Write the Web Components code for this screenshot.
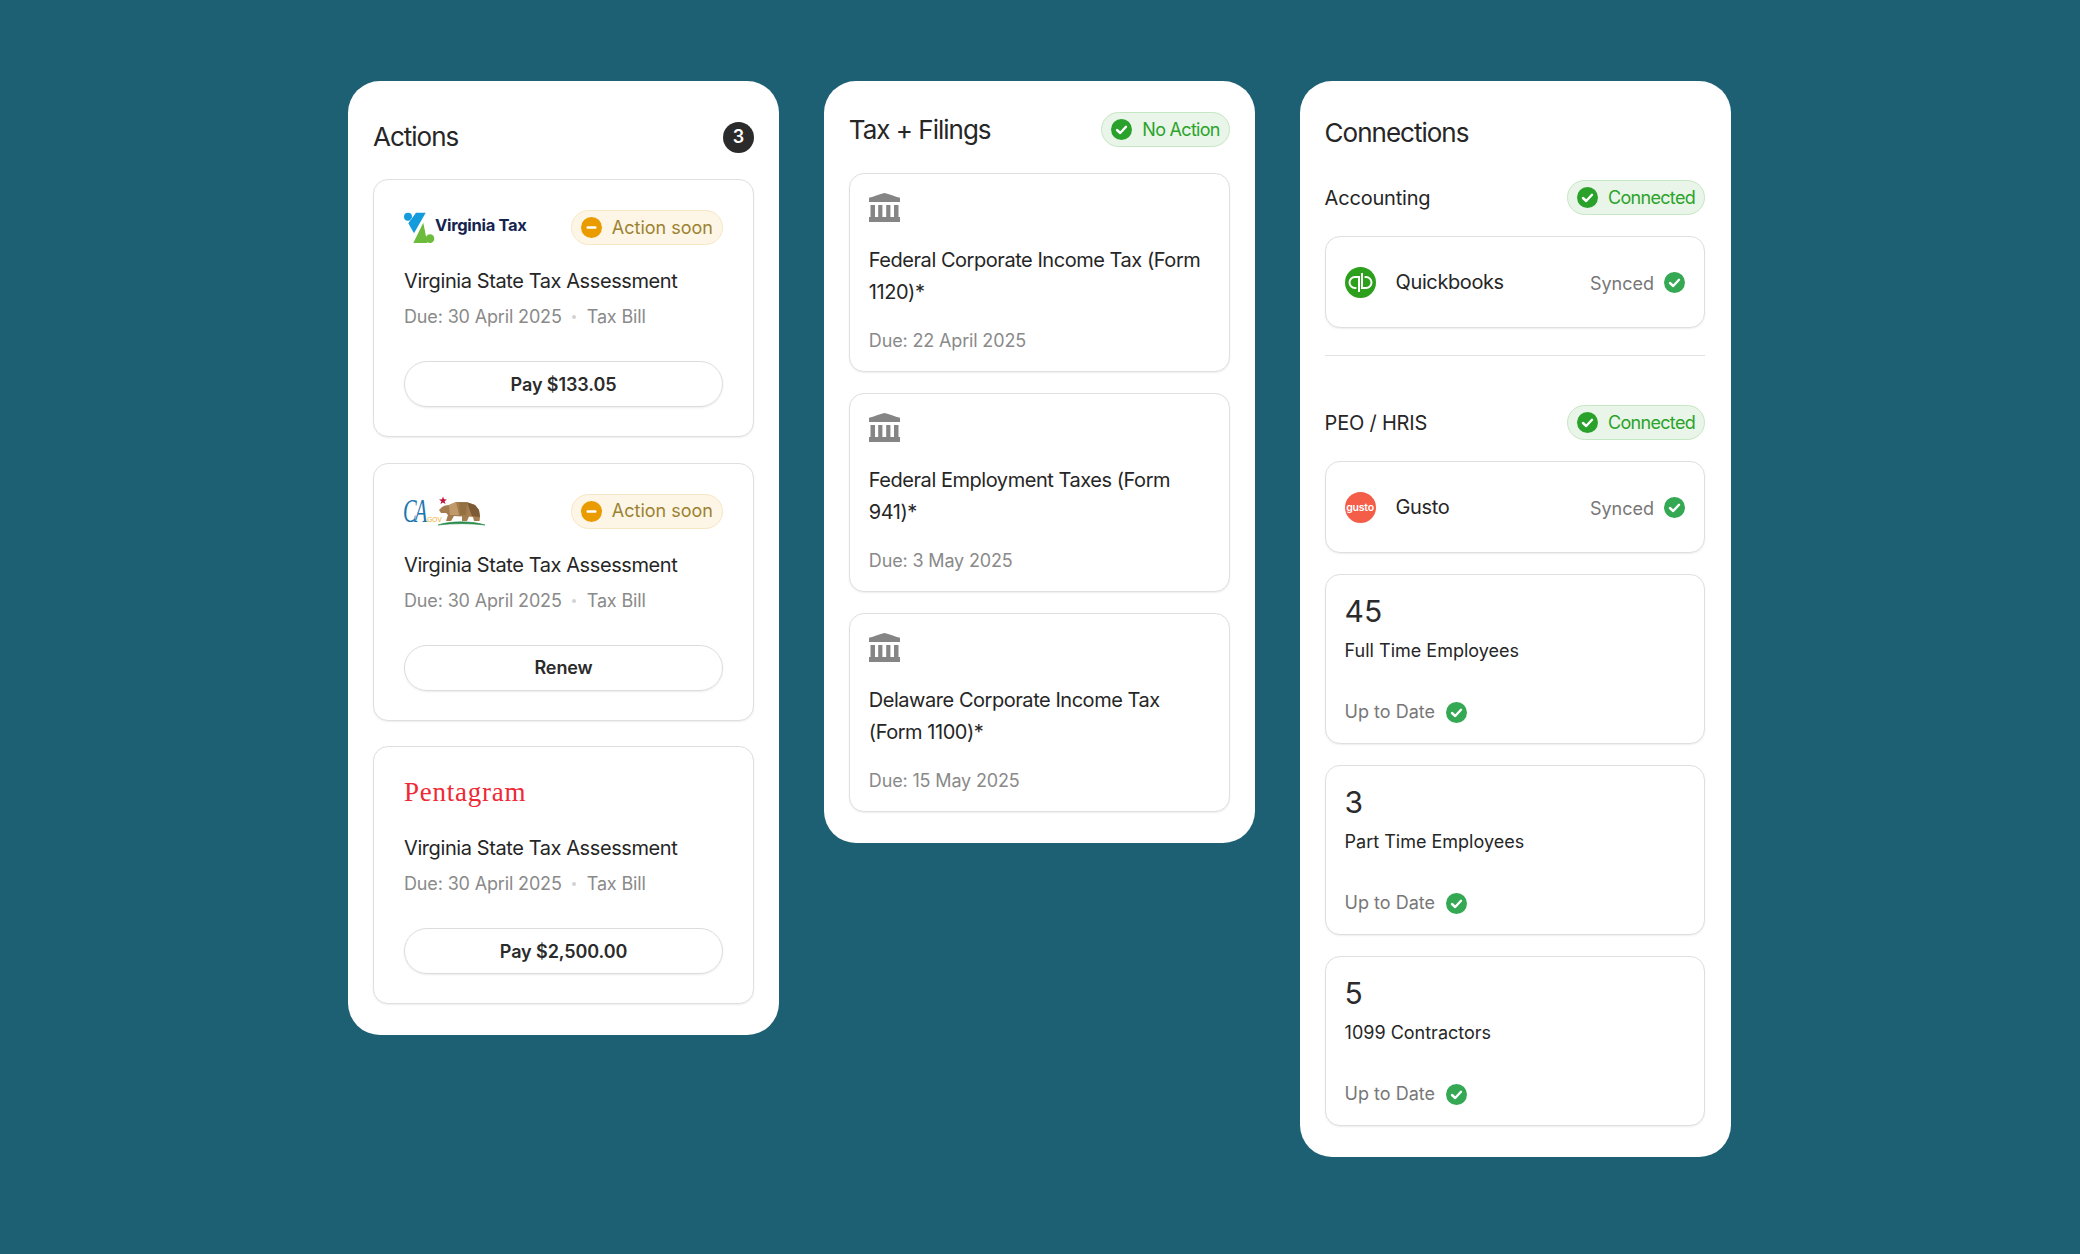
<!DOCTYPE html>
<html lang="en">
<head>
<meta charset="utf-8">
<title>Dashboard cards</title>
<style>
  html, body { margin: 0; }
  body {
    box-sizing: border-box;
    height: 1254px;
    overflow: hidden;
    padding: 81px 0 0 348px;
    display: flex;
    align-items: flex-start;
    gap: 44.8px;
    background: #1d6074;
    color: #262626;
    font-family: Inter, "Liberation Sans", sans-serif;
  }
</style>
</head>
<body>
  <dash-panel top="40" gap="26" item-gap="25.5">
    <span slot="title">Actions</span>
    <count-dot slot="aside">3</count-dot>
    <action-card heading="Virginia State Tax Assessment" cta="Pay $133.05" urgent>
      <va-logo slot="logo"></va-logo>
    </action-card>
    <action-card heading="Virginia State Tax Assessment" cta="Renew" urgent>
      <ca-logo slot="logo"></ca-logo>
    </action-card>
    <action-card heading="Virginia State Tax Assessment" cta="Pay $2,500.00">
      <pentagram-logo slot="logo"></pentagram-logo>
    </action-card>
  </dash-panel>

  <dash-panel top="31" gap="26" item-gap="21">
    <span slot="title">Tax + Filings</span>
    <status-badge slot="aside" tone="ok">No Action</status-badge>
    <filing-card due="Due: 22 April 2025">Federal Corporate Income Tax (Form 1120)*</filing-card>
    <filing-card due="Due: 3 May 2025">Federal Employment Taxes (Form 941)*</filing-card>
    <filing-card due="Due: 15 May 2025">Delaware Corporate Income Tax (Form 1100)*</filing-card>
  </dash-panel>

  <dash-panel top="36" gap="31" item-gap="21" right="25.6">
    <span slot="title">Connections</span>
    <section-row label="Accounting"></section-row>
    <sync-card name="Quickbooks"><qb-logo slot="logo"></qb-logo></sync-card>
    <hr-line></hr-line>
    <section-row label="PEO / HRIS"></section-row>
    <sync-card name="Gusto"><gusto-logo slot="logo"></gusto-logo></sync-card>
    <stat-card count="45" label="Full Time Employees"></stat-card>
    <stat-card count="3" label="Part Time Employees"></stat-card>
    <stat-card count="5" label="1099 Contractors"></stat-card>
  </dash-panel>

<script>
  // small helper: every element here is just a shadow root with a fixed template
  class Base extends HTMLElement {
    connectedCallback() {
      if (this.shadowRoot) return;
      this.attachShadow({ mode: "open" });
      this.shadowRoot.innerHTML = `<style>${this.renderStyle()}</style>${this.renderBody()}`;
    }
    attr(name, fallback = "") {
      return this.getAttribute(name) || fallback;
    }
    renderStyle() {
      return ":host { display: block; }";
    }
    renderBody() {
      return "<slot></slot>";
    }
  }

  const cardBox = /* css */ `
    box-sizing: border-box;
    background: #fff;
    border: 1px solid #dfdfdf;
    border-radius: 15px;
    box-shadow: 0 1px 2px rgba(0, 0, 0, 0.07);
  `;

  class DashPanel extends Base {
    renderStyle() {
      return /* css */ `
        :host {
          display: block;
          box-sizing: border-box;
          width: 431px;
          padding: ${this.attr("top", "40")}px ${this.attr("right", "25")}px 31px 25px;
          background: #fff;
          border-radius: 32px;
        }
        .head {
          display: flex;
          align-items: center;
          justify-content: space-between;
          margin-bottom: ${this.attr("gap", "26")}px;
          font-size: 26px;
          line-height: 32px;
          letter-spacing: -1px;
          color: #262626;
        }
        .items {
          display: flex;
          flex-direction: column;
          gap: ${this.attr("item-gap", "26")}px;
        }
      `;
    }
    renderBody() {
      return `
        <div class="head"><slot name="title"></slot><slot name="aside"></slot></div>
        <div class="items"><slot></slot></div>`;
    }
  }

  class CountDot extends Base {
    renderStyle() {
      return /* css */ `
        :host {
          display: flex;
          align-items: center;
          justify-content: center;
          width: 31px;
          height: 31px;
          border-radius: 50%;
          background: #2b2b2b;
          color: #fff;
          font-size: 18px;
          font-weight: 600;
          letter-spacing: 0;
        }
      `;
    }
  }

  class CheckDot extends Base {
    renderStyle() {
      return /* css */ `
        :host { display: block; width: 21px; height: 21px; flex: none; color: ${this.attr("color", "#34a853")}; }
        svg { display: block; }
      `;
    }
    renderBody() {
      return `<svg width="21" height="21" viewBox="0 0 21 21"><circle cx="10.5" cy="10.5" r="10.5" fill="currentColor"/><path d="M6 11l3.2 3L15 7.8" fill="none" stroke="#fff" stroke-width="2.4" stroke-linecap="round" stroke-linejoin="round"/></svg>`;
    }
  }

  class StatusBadge extends Base {
    renderStyle() {
      const ok = this.attr("tone") === "ok";
      return /* css */ `
        :host {
          display: inline-flex;
          align-items: center;
          box-sizing: border-box;
          height: 35px;
          padding: 0 9px;
          gap: 10px;
          border-radius: 18px;
          border: 1px solid ${ok ? "#c6e7c4" : "#f7e8c4"};
          background: ${ok ? "#e9f5e9" : "#fdf6e6"};
          color: ${ok ? "#2ca32a" : "#9c8230"};
          font-size: 18px;
          line-height: 28px;
          letter-spacing: ${ok ? "-0.7px" : "0"};
        }
        svg { display: block; flex: none; }
      `;
    }
    renderBody() {
      const ok = this.attr("tone") === "ok";
      const icon = ok
        ? `<check-dot color="#2aa12a"></check-dot>`
        : `<svg width="21" height="21" viewBox="0 0 21 21"><circle cx="10.5" cy="10.5" r="10.5" fill="#ea9b00"/><rect x="5.5" y="9.2" width="10" height="2.6" rx="1" fill="#fff"/></svg>`;
      return `${icon}<span><slot></slot></span>`;
    }
  }

  class ActionCard extends Base {
    renderStyle() {
      return /* css */ `
        :host {
          display: block;
          ${cardBox}
          padding: 30px 30px 29px;
        }
        .top {
          display: flex;
          align-items: center;
          justify-content: space-between;
          height: 35px;
        }
        .name {
          margin-top: 20px;
          font-size: 20px;
          line-height: 32px;
          letter-spacing: -0.41px;
          color: #262626;
        }
        .meta {
          display: flex;
          align-items: center;
          margin-top: 6px;
          font-size: 18px;
          line-height: 28px;
          letter-spacing: -0.15px;
          color: #8a8a8a;
        }
        .sep {
          width: 4px;
          height: 4px;
          margin: 0 10.5px;
          border-radius: 50%;
          background: #d2d2d2;
        }
        .cta {
          display: flex;
          align-items: center;
          justify-content: center;
          box-sizing: border-box;
          height: 46px;
          margin-top: 30px;
          border: 1px solid #dcdcdc;
          border-radius: 23px;
          box-shadow: 0 1px 2px rgba(0, 0, 0, 0.08);
          font-size: 18px;
          font-weight: 600;
          letter-spacing: -0.1px;
          color: #2b2b2b;
        }
      `;
    }
    renderBody() {
      const badge = this.hasAttribute("urgent") ? `<status-badge tone="warn">Action soon</status-badge>` : "";
      return `
        <div class="top"><slot name="logo"></slot>${badge}</div>
        <div class="name">${this.attr("heading")}</div>
        <div class="meta"><span>Due: 30 April 2025</span><span class="sep"></span><span>Tax Bill</span></div>
        <div class="cta">${this.attr("cta")}</div>`;
    }
  }

  class VaLogo extends Base {
    renderStyle() {
      return /* css */ `
        :host { display: flex; align-items: center; height: 32px; }
        svg { display: block; flex: none; }
        span {
          margin-left: -2px;
          margin-top: -5px;
          font-size: 16.5px;
          font-weight: 700;
          letter-spacing: -0.3px;
          color: #14244f;
          white-space: nowrap;
        }
      `;
    }
    renderBody() {
      return `<svg width="33" height="32" viewBox="0 0 33 32">
        <path d="M19.3 10.7L9.3 31H23.3Z" fill="#6cbb3c"/>
        <circle cx="26" cy="26.6" r="4.3" fill="#6cbb3c"/>
        <circle cx="4" cy="4.7" r="4" fill="#149bdc"/>
        <path d="M12 .7H21.7L10 21.3 4.3 11.3Z" fill="#149bdc" stroke="#fff" stroke-width=".8" paint-order="stroke"/>
      </svg><span>Virginia Tax</span>`;
    }
  }

  class CaLogo extends Base {
    renderStyle() {
      return /* css */ `
        :host { display: block; width: 84px; height: 32px; }
        svg { display: block; overflow: visible; }
        .ca { font: italic 400 33px "Liberation Serif", serif; fill: #1c75ae; letter-spacing: -3px; }
        .gov { font: 400 6.5px "Liberation Sans", sans-serif; fill: #f2ab1d; }
      `;
    }
    renderBody() {
      return `<svg width="84" height="32" viewBox="0 0 84 32">
        <text class="ca" transform="translate(-1 27) scale(.62 1)">CA</text>
        <text class="gov" x="21.5" y="26.5">.GOV</text>
        <path d="M39 1.5l1 2.8 3 .1-2.4 1.8.9 2.9-2.5-1.7-2.5 1.7.9-2.9L35 4.4l3-.1z" fill="#c0143c"/>
        <path d="M35 15L38 12 41 10.5 45 10 52 7 63 7.2 71 10 75 15 76 22 75.5 26H70L69 22 65 21.5 63 26H58V21.5L50 21 47 26H42L44 20 42 18H37Z" fill="#a57c4f"/>
        <path d="M45 10L52 7 55 20 46 20Z" fill="#c19a6b"/>
        <path d="M55 7.2L63 7.2 62 20 56 20Z" fill="#93703f"/>
        <path d="M63 7.2L71 10 75 15 76 22 68 21Z" fill="#7b5a35"/>
        <path d="M34 30C46 25.8 68 25.8 81 30 66 28.2 49 28.2 34 30Z" fill="#2a8a4a" stroke="#2a8a4a" stroke-width=".6"/>
      </svg>`;
    }
  }

  class PentagramLogo extends Base {
    renderStyle() {
      return /* css */ `
        :host {
          display: block;
          margin-top: -5px;
          font-family: "Liberation Serif", serif;
          font-size: 27px;
          line-height: 35px;
          letter-spacing: 0.75px;
          color: #ee2a36;
        }
      `;
    }
    renderBody() {
      return `Pentagram`;
    }
  }

  class FilingCard extends Base {
    renderStyle() {
      return /* css */ `
        :host {
          display: block;
          ${cardBox}
          padding: 19px 19px 16.5px;
        }
        svg { display: block; }
        .name {
          margin-top: 21.5px;
          font-size: 20px;
          line-height: 32px;
          letter-spacing: -0.46px;
          color: #262626;
        }
        .due {
          margin-top: 19px;
          font-size: 18px;
          line-height: 28px;
          letter-spacing: -0.15px;
          color: #8a8a8a;
        }
      `;
    }
    renderBody() {
      return `
        <svg width="31" height="29" viewBox="0 0 31 29" fill="#858585">
          <path d="M0 4.8C5 3.4 11 1.2 15.5 0 20 1.2 26 3.4 31 4.8V9H0Z"/>
          <path d="M1.5 12H6V24H1.5ZM9.2 12H13.4V24H9.2ZM17.2 12H21.4V24H17.2ZM25 12H29.5V24H25Z"/>
          <rect y="24" width="31" height="5"/>
        </svg>
        <div class="name"><slot></slot></div>
        <div class="due">${this.attr("due")}</div>`;
    }
  }

  class SectionRow extends Base {
    renderStyle() {
      return /* css */ `
        :host {
          display: flex;
          align-items: center;
          justify-content: space-between;
          font-size: 20px;
          line-height: 32px;
          letter-spacing: -0.2px;
          color: #262626;
        }
      `;
    }
    renderBody() {
      return `<span>${this.attr("label")}</span><status-badge tone="ok">Connected</status-badge>`;
    }
  }

  class HrLine extends Base {
    renderStyle() {
      return /* css */ `
        :host { display: block; height: 1px; margin: 6px 0 28px; background: #e3e3e3; }
      `;
    }
    renderBody() {
      return "";
    }
  }

  class SyncCard extends Base {
    renderStyle() {
      return /* css */ `
        :host {
          display: flex;
          align-items: center;
          ${cardBox}
          height: 92px;
          padding: 0 19px;
        }
        .name {
          flex: 1;
          margin-left: 20px;
          font-size: 20px;
          letter-spacing: -0.4px;
          color: #262626;
        }
        .state {
          margin: 2px 10px 0 0;
          font-size: 18px;
          color: #777;
        }
      `;
    }
    renderBody() {
      return `<slot name="logo"></slot><span class="name">${this.attr("name")}</span><span class="state">Synced</span><check-dot></check-dot>`;
    }
  }

  class QbLogo extends Base {
    renderStyle() {
      return /* css */ `
        :host { display: block; width: 31px; height: 31px; flex: none; }
        svg { display: block; }
      `;
    }
    renderBody() {
      return `<svg width="31" height="31" viewBox="0 0 31 31">
        <circle cx="15.5" cy="15.5" r="15.5" fill="#2ca01c"/>
        <path d="M14 10H10a5.5 5.5 0 0 0 0 11h1.4M14 9V25M17 21H21a5.5 5.5 0 0 0 0-11h-1.4M17 22V6" fill="none" stroke="#fff" stroke-width="2"/>
      </svg>`;
    }
  }

  class GustoLogo extends Base {
    renderStyle() {
      return /* css */ `
        :host {
          display: flex;
          align-items: center;
          justify-content: center;
          width: 31px;
          height: 31px;
          flex: none;
          border-radius: 50%;
          background: #f45d48;
          color: #fff;
          font-size: 10.5px;
          font-weight: 600;
          letter-spacing: -0.2px;
        }
      `;
    }
    renderBody() {
      return `gusto`;
    }
  }

  class StatCard extends Base {
    renderStyle() {
      return /* css */ `
        :host {
          display: block;
          ${cardBox}
          padding: 16px 19px 17px;
        }
        .count { font-size: 30px; line-height: 40px; color: #2b2b2b; }
        .label { margin-top: 6px; font-size: 18px; line-height: 28px; color: #262626; }
        .state {
          display: flex;
          align-items: center;
          gap: 11px;
          margin-top: 33px;
          font-size: 18px;
          line-height: 28px;
          color: #777;
        }
      `;
    }
    renderBody() {
      return `
        <div class="count">${this.attr("count")}</div>
        <div class="label">${this.attr("label")}</div>
        <div class="state"><span>Up to Date</span><check-dot></check-dot></div>`;
    }
  }

  customElements.define("check-dot", CheckDot);
  customElements.define("count-dot", CountDot);
  customElements.define("status-badge", StatusBadge);
  customElements.define("va-logo", VaLogo);
  customElements.define("ca-logo", CaLogo);
  customElements.define("pentagram-logo", PentagramLogo);
  customElements.define("qb-logo", QbLogo);
  customElements.define("gusto-logo", GustoLogo);
  customElements.define("action-card", ActionCard);
  customElements.define("filing-card", FilingCard);
  customElements.define("section-row", SectionRow);
  customElements.define("hr-line", HrLine);
  customElements.define("sync-card", SyncCard);
  customElements.define("stat-card", StatCard);
  customElements.define("dash-panel", DashPanel);
</script>
</body>
</html>
